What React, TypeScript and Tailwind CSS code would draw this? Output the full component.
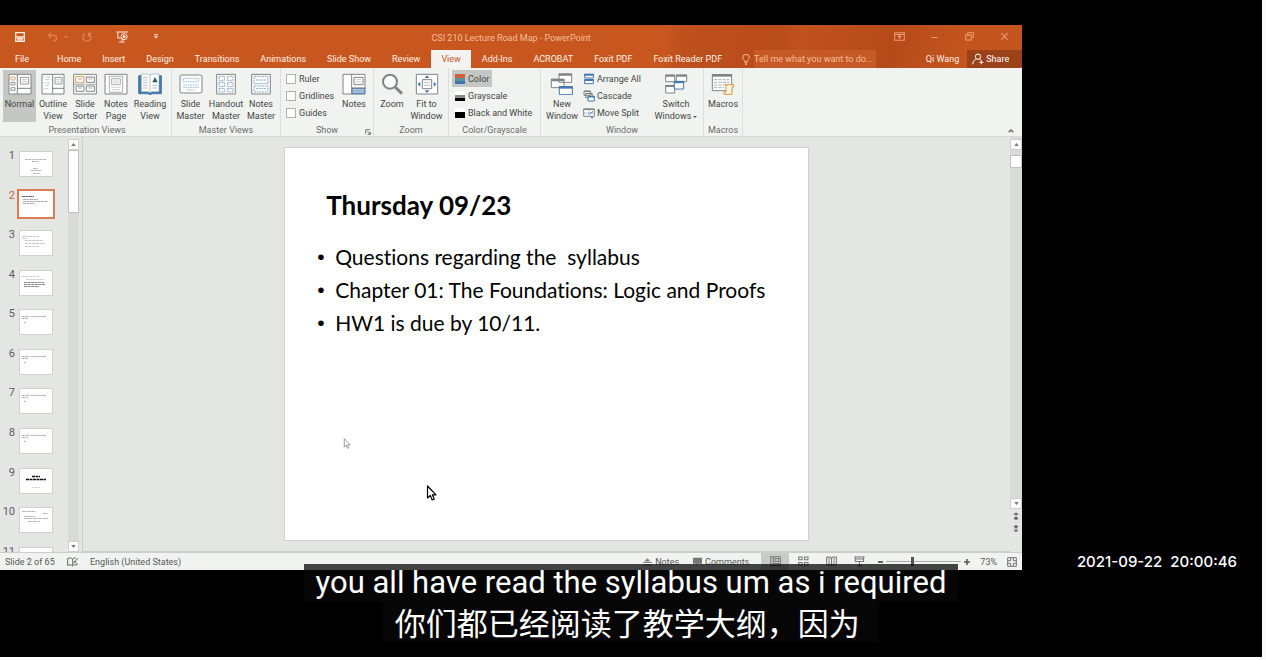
import type { ReactNode } from "react";

const G = "#808484";
const B = "#4678ae";

function Icon({ w = 72, h = 66, className = "w-6 h-[22px]", children }: { w?: number; h?: number; className?: string; children: ReactNode }) {
  return (
    <svg viewBox={`0 0 ${w} ${h}`} className={`shrink-0 ${className}`} fill="none" stroke={G} strokeWidth={3} aria-hidden="true">
      {children}
    </svg>
  );
}

const icons = {
  normal: (
    <Icon>
      <path fill="#fff" d="M3 4h66v59H3zM28 4v59M28 46h41" />
      <path stroke="#dc9a55" strokeWidth={2.5} d="M9 12h12v9H9z" />
      <path strokeWidth={2.5} d="M9 28h12v8H9zM9 44h12v8H9zM37 13h25v20H37z" />
      <path stroke="#aaa" strokeWidth={2} d="M42 20h15M42 26h15" />
    </Icon>
  ),
  outline: (
    <Icon>
      <path fill="#fff" d="M3 4h66v59H3zM35 4v59M35 46h34" />
      <path strokeWidth={2.5} d="M42 13h21v20H42z" />
      <path stroke="#aaa" strokeWidth={2} d="M46 20h13M46 26h13M8 12h4M16 12h12M12 20h14M8 30h4M16 30h10M12 38h12M8 47h4M14 47h8" />
    </Icon>
  ),
  sorter: (
    <Icon>
      <path fill="#fff" d="M2 4h68v59H2z" />
      <path stroke="#dc9a55" d="M8 11h25v18H8z" />
      <path d="M40 12h24v16H40zM9 39h24v16H9zM40 39h24v16H40z" />
      <path strokeWidth={2} d="M15 18h12M46 18h12M15 45h12M46 45h12M2 34h68" />
    </Icon>
  ),
  page: (
    <Icon>
      <path fill="#fff" d="M3 4h66v59H3z" />
      <path strokeWidth={2} d="M16 10h40v48H16zM23 17h26v18H23z" />
      <path strokeWidth={2} stroke="#999" strokeDasharray="4 2" d="M28 24h17M28 29h17M23 43h26M23 50h26" />
    </Icon>
  ),
  reading: (
    <Icon>
      <path fill={B} stroke={B} d="M2 8h68v54H42l-6 3-6-3H2z" />
      <path fill="#fff" stroke="#8aa" strokeWidth={2} d="M10 3h20l6 3 6-3h21v53H42l-6 3-6-3H10zM36 6v52" />
      <path strokeWidth={2} stroke="#999" d="M15 13h14M15 21h14M15 29h14M15 37h14M15 45h14M43 37h14M43 45h14" />
      <path fill="#355" stroke="none" d="M43 28l8-16 8 16z" />
    </Icon>
  ),
  slideMaster: (
    <Icon>
      <path fill="#fff" d="M6 6h60l3 3v48l-3 3H6l-3-3V9z" />
      <path stroke="#7398bd" strokeWidth={2} strokeDasharray="5 2" d="M13 16h46v10H13zM13 36h46M13 43h46M22 51h28" />
    </Icon>
  ),
  handout: (
    <Icon>
      <path fill="#fff" d="M8 4h56v59H8z" />
      <path stroke="#7398bd" strokeWidth={2.5} strokeDasharray="6 2" d="M15 10h16v12H15zM41 10h16v12H41zM15 28h16v12H15zM41 28h16v12H41zM15 46h16v11H15zM41 46h16v11H41z" />
    </Icon>
  ),
  notesMaster: (
    <Icon>
      <path fill="#fff" d="M8 4h56v59H8z" />
      <path stroke="#7398bd" strokeWidth={2.5} strokeDasharray="6 2" d="M15 10h42v22H15zM15 39h42v18H15zM21 47h30M21 21h30" />
    </Icon>
  ),
  notes: (
    <Icon>
      <path fill="#fff" d="M3 4h66v59H3z" />
      <path fill="#a9c6e6" stroke={B} d="M30 46h38v16H30z" />
      <path d="M29 4v59M29 45h40M36 13h27v22H36z" />
      <path stroke="#7398bd" strokeWidth={2} d="M34 54h30" />
      <path stroke="#aaa" strokeWidth={2} d="M41 20h17M41 27h17" />
    </Icon>
  ),
  zoom: (
    <Icon>
      <circle cx="30" cy="26" r="21" strokeWidth={6} fill="#fafcfb" />
      <path strokeWidth={9} d="M45 42l21 20" />
    </Icon>
  ),
  fit: (
    <Icon>
      <path fill="#fff" d="M4 4h64v59H4z" />
      <path d="M22 20h28v27H22z" />
      <path strokeWidth={2} stroke="#999" d="M27 29h18M27 37h18" />
      <path fill={B} stroke="none" d="M29 15l7-8 7 8zM29 52l7 8 7-8zM16 26l-8 8 8 7zM56 26l8 8-8 7z" />
    </Icon>
  ),
  newWindow: (
    <Icon>
      <path fill="#fff" d="M27 3h38v25H27zM4 19h38v25H4z" />
      <path strokeWidth={7} d="M26 5h40M3 21h40" />
      <path fill="#fff" stroke={B} d="M28 41h39v24H28z" />
      <path stroke={B} strokeWidth={8} d="M27 43h41" />
    </Icon>
  ),
  switchWindows: (
    <Icon>
      <path fill="#fff" d="M5 6h27v20H5zM37 6h31v20H37zM5 38h27v22H5z" />
      <path strokeWidth={6} d="M4 8h29M36 8h33M4 39h29" />
      <path fill="#fff" stroke={B} d="M31 26h28v22H31z" />
      <path stroke={B} strokeWidth={7} d="M30 27h30" />
    </Icon>
  ),
  macros: (
    <Icon>
      <path fill="#fff" d="M4 5h58v48H4z" />
      <path strokeWidth={8} d="M3 7h60" />
      <path strokeWidth={2} strokeDasharray="10 3" d="M9 20h46M9 28h46M9 36h36M9 44h30" />
      <path fill="#fff4e5" stroke="#dd9442" d="M45 35h23v7h-5v22H39v-7h6z" />
    </Icon>
  ),
};

function BigButton({ icon, lines, className, active = false, caret = false }: { icon: ReactNode; lines: string[]; className: string; active?: boolean; caret?: boolean }) {
  return (
    <button className={`flex h-[52px] shrink-0 flex-col items-center gap-[3px] pt-[3px] leading-3 ${active ? "bg-[#c5c7c5]" : ""} ${className}`}>
      {icon}
      <span className="block text-center whitespace-nowrap">
        {lines.map((l, i) => (
          <span key={l} className="block">
            {l}
            {caret && i === lines.length - 1 ? <span className="ml-[2px] inline-block border-x-2 border-t-2 border-x-transparent border-t-[#555] align-middle" /> : null}
          </span>
        ))}
      </span>
    </button>
  );
}

function Group({ label, className, children, launcher = false }: { label: string; className: string; children: ReactNode; launcher?: boolean }) {
  return (
    <section aria-label={label} className={`relative flex shrink-0 flex-col border-r border-[#dcdedc] pt-[2px] ${className}`}>
      <div className="flex h-[55px]">{children}</div>
      <div className="text-center leading-3 text-[#6b6d6b]">{label}</div>
      {launcher && (
        <button aria-label="Show settings" className="absolute right-[2px] bottom-px">
          <svg viewBox="0 0 18 18" className="size-[6px]" fill="none" stroke="#777" strokeWidth={3}>
            <path d="M2 14V2h13M7 7l9 9M16 8v8H8" />
          </svg>
        </button>
      )}
    </section>
  );
}

const swatches = [
  { label: "Color", fill: ["#d0603a", "#5b8f9c", "#3f74ad"], active: true },
  { label: "Grayscale", fill: ["#ffffff", "#8b8b8b", "#000000"], active: false },
  { label: "Black and White", fill: ["#ffffff", "#000000", "#000000"], active: false },
];

const windowActions = [
  {
    label: "Arrange All",
    icon: (
      <Icon w={36} h={36} className="size-3">
        <path fill="#fff" stroke={B} d="M5 4h26v11H5zM5 20h26v12H5z" />
        <path stroke={B} strokeWidth={6} d="M4 5h28M4 21h28" />
      </Icon>
    ),
  },
  {
    label: "Cascade",
    icon: (
      <Icon w={36} h={36} className="size-3">
        <path fill="#fff" d="M3 3h19v13H3zM8 10h19v13H8z" />
        <path strokeWidth={4} d="M3 4h20M8 11h20" />
        <path fill="#fff" stroke={B} d="M15 19h19v14H15z" />
        <path stroke={B} strokeWidth={5} d="M14 20h21" />
      </Icon>
    ),
  },
  {
    label: "Move Split",
    icon: (
      <Icon w={36} h={36} className="size-3">
        <path fill="#fff" d="M2 6h32v22H2z" />
        <path strokeWidth={4} d="M2 7h32" />
        <path stroke={B} strokeWidth={2} strokeDasharray="4 2" d="M3 18h30M18 8v20" />
        <path stroke={B} d="M20 22l10-9M24 30l3 4 3-4" />
      </Icon>
    ),
  },
];

const tabs = ["Home", "Insert", "Design", "Transitions", "Animations", "Slide Show", "Review", "View", "Add-Ins", "ACROBAT", "Foxit PDF", "Foxit Reader PDF"];

const outlineLines = <path d="M3 7.500h8M12 7.500h15M3 9.500h6M5 13.500h2" stroke="#888" strokeDasharray="2 .6" />;
const thumbs: ReactNode[] = [
  <path d="M6 8.500h21M13 10.500h7M14 17.500h5M12 19.500h10M14 22.500h7" stroke="#999" strokeDasharray="3 .6" />,
  <g strokeDasharray="3 .5">
    <path d="M3 5.500h12" stroke="#222" />
    <path d="M4 8.500h15M4 10.500h25M4 12.500h12" stroke="#888" />
  </g>,
  <path d="M3 6.500h18M3 8.500h5M6 10.500h18M6 13.500h20M6 16.500h14" stroke="#aaa" strokeDasharray="3 .6" />,
  <g strokeDasharray="3 .6">
    <path d="M3 6.500h18M7 9.500h18" stroke="#bbb" />
    <path d="M5 12.500h20M5 14.500h21M5 16.500h15" stroke="#555" />
  </g>,
  outlineLines,
  outlineLines,
  outlineLines,
  outlineLines,
  <g>
    <path d="M13 8.500h8M7 11.500h20" stroke="#111" strokeWidth={1.6} strokeDasharray="3 .5" />
    <path d="M13 19.500h8" stroke="#ccc" />
  </g>,
  <path d="M3 4.500h14M24 6.500h5M5 9.500h11M5 11.500h24M9 14.500h12" stroke="#999" strokeDasharray="4 .6" />,
  <path d="M5 6.500h16" stroke="#999" />,
];

function Arrow({ up = false, className = "size-[11px]" }: { up?: boolean; className?: string }) {
  return (
    <button aria-label={up ? "Scroll up" : "Scroll down"} className={`flex shrink-0 items-center justify-center border border-[#cfd1cf] bg-white ${className}`}>
      <svg viewBox="0 0 6 4" className="h-[3px] w-[5px]" fill="#777">
        <path d={up ? "M0 4l3-4 3 4z" : "M0 0l3 4 3-4z"} />
      </svg>
    </button>
  );
}

function Pointer({ className }: { className: string }) {
  return (
    <svg viewBox="0 0 10 16" className={`absolute ${className}`} fill="#fff" strokeWidth={1.2} strokeLinejoin="round" aria-hidden="true">
      <path d="M1 1v12l2.800-2.600L5.700 15l2-.9-1.800-4.300H9.500z" />
    </svg>
  );
}

function DoubleArrow({ up = false }: { up?: boolean }) {
  return (
    <button aria-label={up ? "Previous slide" : "Next slide"} className="flex h-[13px] w-full items-center justify-center">
      <svg viewBox="0 0 18 24" className="h-2 w-[6px]" fill="#666">
        <path d={up ? "M1 9l8-8 8 8zM1 20l8-8 8 8zM5 20h8v3H5z" : "M1 14l8 8 8-8zM1 4l8 8 8-8zM5 1h8v3H5z"} />
      </svg>
    </button>
  );
}

function TitleBar() {
  return (
    <div className="grid h-[25px] grid-cols-[1fr_auto_1fr] items-center text-[#f6bd98]">
      <div className="flex items-center pl-[15px] pb-[2px]">
        <button aria-label="Save" className="mr-[22px] text-[#ffeade]">
          <svg viewBox="0 0 30 30" className="size-[10px]" fill="none" stroke="currentColor" strokeWidth={4}>
            <path d="M2 2h26v26H2zM4 15h22M9 27v-7h12v7M14 22v5" />
          </svg>
        </button>
        <button aria-label="Undo" className="mr-[6px] text-[#dd8250]">
          <svg viewBox="0 0 33 30" className="h-[10px] w-[11px]" fill="none" stroke="currentColor" strokeWidth={4}>
            <path d="M12 2L4 10l8 8M4 10h15c13 0 13 16 0 17" />
          </svg>
        </button>
        <button aria-label="Undo list" className="mr-[14px] border-x-2 border-t-2 border-x-transparent border-t-[#dd8250]" />
        <button aria-label="Repeat" className="mr-6 text-[#dd8250]">
          <svg viewBox="0 0 30 30" className="size-[10px]" fill="none" stroke="currentColor" strokeWidth={4}>
            <path d="M9 5a12 12 0 1 0 13 1M20 15V4h9" />
          </svg>
        </button>
        <button aria-label="Start from beginning" className="mr-[25px] text-[#ffeade]">
          <svg viewBox="0 0 38 36" className="h-3 w-[13px]" fill="none" stroke="currentColor" strokeWidth={3}>
            <path d="M1 3h35M5 3v18h9M18 21v9M9 33h17" />
            <circle cx="24" cy="17" r="9" />
            <path fill="currentColor" d="M22 13l6 4-6 4z" />
          </svg>
        </button>
        <button aria-label="Customize toolbar" className="text-[#ffeade]">
          <svg viewBox="0 0 12 14" className="h-[5px] w-1" fill="currentColor">
            <path d="M0 0h12v3H0zM0 6h12l-6 7z" />
          </svg>
        </button>
      </div>
      <h1 className="whitespace-nowrap">CSI 210 Lecture Road Map - PowerPoint</h1>
      <div className="flex justify-end pb-[2px]">
        {[
          ["Ribbon display options", "M2 5h28v22H2zM2 10h28M16 23v-9M11 18l5-5 5 5"],
          ["Minimize", "M7 19h18"],
          ["Restore", "M5 12h16v14H5zM11 12V5h16v14h-6"],
          ["Close", "M7 6l18 19M25 6L7 25"],
        ].map(([label, d]) => (
          <button key={label} aria-label={label} className="flex w-[35px] justify-center text-[#eb9d70]">
            <svg viewBox="0 0 32 32" className="size-[11px]" fill="none" stroke="currentColor" strokeWidth={3}>
              <path d={d} />
            </svg>
          </button>
        ))}
      </div>
    </div>
  );
}

function TabRow() {
  return (
    <div className="flex h-[18px] items-stretch text-[#fff0e6]">
      <button className="w-[44px] shrink-0">File</button>
      <nav className="flex shrink-0 gap-px pl-[3px]">
        {tabs.map((t) => (
          <button key={t} className={t === "View" ? "bg-[#f3f4f2] px-[10px] text-[#c8571f]" : "px-[10px]"}>
            {t}
          </button>
        ))}
      </nav>
      <label className="ml-[10px] flex w-[134px] items-center gap-1 text-[#f6bd98]">
        <svg viewBox="0 0 24 33" className="h-[11px] w-2 shrink-0" fill="none" stroke="currentColor" strokeWidth={3}>
          <path d="M8 23c0-5-6-7-6-13a10 9 0 0 1 20 0c0 6-6 8-6 13zM8 27h8M9 31h6" />
        </svg>
        <input aria-label="Tell me" placeholder="Tell me what you want to do..." className="h-full w-full min-w-0 bg-[#c65a26] outline-none placeholder:text-[#f6bd98]" />
      </label>
      <span className="ml-auto flex items-center whitespace-nowrap">Qi Wang</span>
      <button className="ml-2 flex w-[55px] items-center gap-[2px] bg-[#9c4219] pl-[5px] text-white">
        <svg viewBox="0 0 36 36" className="size-3" fill="none" stroke="currentColor" strokeWidth={3}>
          <circle cx="18" cy="11" r="8" />
          <path d="M2 34c1-8 5-14 11-16M22 18l4 3M22 28h12M28 22v12" />
        </svg>
        Share
      </button>
    </div>
  );
}

function Ribbon() {
  return (
    <div className="relative flex h-[69px] border-b border-[#d9dbd9] bg-[#f1f3f1] text-[#444644]">
      <Group label="Presentation Views" className="w-[172px] pl-[3px]">
        <BigButton icon={icons.normal} lines={["Normal"]} className="w-[33px]" active />
        <BigButton icon={icons.outline} lines={["Outline", "View"]} className="w-[34px]" />
        <BigButton icon={icons.sorter} lines={["Slide", "Sorter"]} className="w-[30px]" />
        <BigButton icon={icons.page} lines={["Notes", "Page"]} className="w-8" />
        <BigButton icon={icons.reading} lines={["Reading", "View"]} className="w-9" />
      </Group>
      <Group label="Master Views" className="w-[109px]">
        <BigButton icon={icons.slideMaster} lines={["Slide", "Master"]} className="w-[37px]" />
        <BigButton icon={icons.handout} lines={["Handout", "Master"]} className="w-[34px]" />
        <BigButton icon={icons.notesMaster} lines={["Notes", "Master"]} className="w-9" />
      </Group>
      <Group label="Show" className="w-[93px]" launcher>
        <div className="flex w-[56px] shrink-0 flex-col pl-[5px]">
          {["Ruler", "Gridlines", "Guides"].map((c) => (
            <label key={c} className="flex h-[17px] items-center gap-[3px] whitespace-nowrap">
              <input type="checkbox" className="size-[10px] shrink-0 appearance-none border border-[#b0b2b0] bg-white" />
              {c}
            </label>
          ))}
        </div>
        <BigButton icon={icons.notes} lines={["Notes"]} className="w-[34px]" />
      </Group>
      <Group label="Zoom" className="w-[75px]">
        <BigButton icon={icons.zoom} lines={["Zoom"]} className="w-[36px]" />
        <BigButton icon={icons.fit} lines={["Fit to", "Window"]} className="w-[33px]" />
      </Group>
      <Group label="Color/Grayscale" className="w-[92px]">
        <div className="flex flex-col items-start pl-[3px]">
          {swatches.map((s) => (
            <button key={s.label} className={`flex h-[17px] items-center gap-[3px] px-[3px] whitespace-nowrap ${s.active ? "bg-[#c5c7c5]" : ""}`}>
              <svg viewBox="0 0 10 10" className="size-[10px] shrink-0">
                <path fill={s.fill[0]} d="M0 0h10v4H0z" />
                <path fill={s.fill[1]} d="M0 4h10v3H0z" />
                <path fill={s.fill[2]} d="M0 7h10v3H0z" />
              </svg>
              {s.label}
            </button>
          ))}
        </div>
      </Group>
      <Group label="Window" className="w-[163px]">
        <BigButton icon={icons.newWindow} lines={["New", "Window"]} className="w-[42px]" />
        <div className="flex w-[68px] shrink-0 flex-col">
          {windowActions.map((a) => (
            <button key={a.label} className="flex h-[17px] items-center gap-[2px] whitespace-nowrap">
              {a.icon}
              {a.label}
            </button>
          ))}
        </div>
        <BigButton icon={icons.switchWindows} lines={["Switch", "Windows"]} className="w-[50px]" caret />
      </Group>
      <Group label="Macros" className="w-[39px]">
        <BigButton icon={icons.macros} lines={["Macros"]} className="w-[38px]" />
      </Group>
      <button aria-label="Collapse the ribbon" className="mt-auto mr-2 mb-[3px] ml-auto">
        <svg viewBox="0 0 18 12" className="h-1 w-[6px]" fill="none" stroke="#666" strokeWidth={4}>
          <path d="M2 10l7-7 7 7" />
        </svg>
      </button>
    </div>
  );
}

function Workspace() {
  return (
    <div className="flex min-h-0 flex-1 bg-[#e4e6e4]">
      <aside className="h-full w-[68px] shrink-0 overflow-hidden pt-[12px]">
        <ol className="flex h-[108%] flex-col">
          {thumbs.map((t, i) => (
            <li key={i} className="flex min-h-0 flex-1 items-start">
              <span className={`mt-px w-[15px] shrink-0 text-right text-[11px] leading-3 ${i === 1 ? "text-[#c8663c]" : "text-[#5c5e5c]"}`}>{i + 1}</span>
              <svg viewBox="0 0 34 26" className={`mt-[2px] ml-1 h-[26px] w-[34px] shrink-0 bg-white outline ${i === 1 ? "outline-2 outline-[#da7c50]" : "outline-1 -outline-offset-1 outline-[#cfd1cf]"}`} fill="none" strokeWidth={0.7}>
                {t}
              </svg>
            </li>
          ))}
        </ol>
      </aside>
      <div className="flex w-[15px] shrink-0 flex-col border-r border-[#cccecc] pt-[2px] pr-[3px]">
        <Arrow up />
        <div className="flex-1 bg-[#d9dbd9]">
          <div className="h-[16%] border border-[#bfc1bf] bg-white" />
        </div>
        <Arrow />
      </div>
      <main className="flex min-w-0 flex-1 items-start justify-center border-b border-[#cccecc] pt-[10px]">
        <article className="relative aspect-[4/3] w-[56.6%] border border-[#cfd1cf] bg-white font-[Lato,sans-serif] text-black [font-variant-ligatures:none]">
          <h2 className="pt-[39px] pl-[41px] text-[26px] leading-9 font-bold">Thursday 09/23</h2>
          <ul className="pt-[17px] pl-8 text-[21px] leading-[33px]">
            {["Questions regarding the  syllabus", "Chapter 01: The Foundations: Logic and Proofs", "HW1 is due by 10/11."].map((b) => (
              <li key={b} className="flex whitespace-pre">
                <span className="w-[18px] shrink-0 font-['Liberation_Sans',sans-serif]">•</span>
                {b}
              </li>
            ))}
          </ul>
          <Pointer className="top-[74%] left-[11%] h-[11px] w-2 stroke-[#888]" />
          <Pointer className="top-[86%] left-[27%] h-4 w-[11px] stroke-black" />
        </article>
      </main>
      <div className="flex w-3 shrink-0 flex-col bg-[#d9dbd9] pt-[2px]">
        <Arrow up className="h-[11px] w-3" />
        <div className="flex-1 pt-[5px]">
          <div className="h-[13px] border border-[#bfc1bf] bg-white" />
        </div>
        <Arrow className="h-[11px] w-3" />
        <div className="h-[43px] bg-[#e4e6e4]">
          <DoubleArrow up />
          <DoubleArrow />
        </div>
      </div>
    </div>
  );
}

function StatusBar() {
  const views: [string, ReactNode][] = [
    ["Normal view", <path d="M2 2h28v26H2zM9 2v26M9 22h21M14 7h11v9H14z" />],
    ["Slide sorter", <path d="M2 3h10v8H2zM19 3h10v8H19zM2 19h10v8H2zM19 19h10v8H19z" />],
    ["Reading view", <path d="M2 3h10l4 3 4-3h10v23H20l-4 3-4-3H2zM16 6v22M6 9h6M6 15h6M6 21h6M20 9h6M20 15h6M20 21h6" />],
    ["Slide show", <path d="M1 3h30M4 4v12h24V4M16 16v12M9 28h14M4 9h24" />],
  ];
  return (
    <footer className="flex h-[18px] shrink-0 items-center border-t border-[#cccecc] bg-[#f1f3f1] pr-[5px] pl-[5px] whitespace-nowrap text-[#555755]">
      <span className="w-[62px]">Slide 2 of 65</span>
      <button aria-label="Spelling" className="w-[23px]">
        <svg viewBox="0 0 36 30" className="h-[10px] w-3" fill="none" stroke="#666" strokeWidth={3}>
          <path d="M17 6C13 2 7 3 2 4v21c5-2 11-2 15 2 3-4 8-4 13-3v-6M17 6v20M17 6c3-3 7-3 10-3M20 19L32 4M22 12l4 6" />
        </svg>
      </button>
      <span>English (United States)</span>
      <button className="ml-auto flex items-center gap-[3px]">
        <svg viewBox="0 0 27 24" className="h-2 w-[9px]" fill="none" stroke="#666" strokeWidth={3}>
          <path d="M1 13h25M1 21h25M8 8l5-6 5 6z" />
        </svg>
        Notes
      </button>
      <button className="ml-[14px] flex items-center gap-[3px]">
        <svg viewBox="0 0 27 27" className="size-[9px]" fill="#777">
          <path d="M0 2h27v18H16l-5 6v-6H0z" />
        </svg>
        Comments
      </button>
      <div className="ml-3 flex h-full">
        {views.map(([label, d], i) => (
          <button key={label} aria-label={label} className={`flex w-7 items-center justify-center ${i === 0 ? "bg-[#c9cbc9]" : ""}`}>
            <svg viewBox="0 0 32 32" className="size-[11px]" fill="none" stroke="#777" strokeWidth={3}>
              {d}
            </svg>
          </button>
        ))}
      </div>
      <button aria-label="Zoom out" className="ml-[5px] h-[2px] w-[5px] bg-[#666]" />
      <input
        type="range"
        aria-label="Zoom level"
        min={0}
        max={100}
        defaultValue={35}
        className="mx-[3px] h-[9px] w-[75px] appearance-none bg-[linear-gradient(#aaa,#aaa)] bg-[length:100%_1px] bg-center bg-no-repeat [&::-webkit-slider-thumb]:h-[9px] [&::-webkit-slider-thumb]:w-[3px] [&::-webkit-slider-thumb]:appearance-none [&::-webkit-slider-thumb]:bg-[#555]"
      />
      <button aria-label="Zoom in" className="flex">
        <svg viewBox="0 0 6 6" className="size-[6px]" stroke="#555" strokeWidth={1.5}>
          <path d="M3 0v6M0 3h6" />
        </svg>
      </button>
      <span className="w-[37px] text-center">73%</span>
      <button aria-label="Fit slide to window" className="flex">
        <svg viewBox="0 0 30 30" className="size-[10px]" fill="none" stroke="#777" strokeWidth={3}>
          <path d="M2 2h26v26H2zM11 2v9H2M19 2v9h9M2 19h9v9M28 19h-9v9" />
        </svg>
      </button>
    </footer>
  );
}

export default function App() {
  return (
    <div className="h-screen overflow-hidden bg-[#fafafa] pr-1 pb-[3px]">
      <div className="relative flex h-full bg-black pt-[25px] pb-[87px]">
        <div className="flex min-h-0 w-[81%] flex-col overflow-hidden bg-[#e4e6e4] font-[Roboto,'Noto_Sans',sans-serif] text-[9px] leading-3">
          <header className="shrink-0 bg-[linear-gradient(100deg,#c8571f_64%,#bd501d_66%,#b84c1a_75%,#c0521e_77%,#b54a19_86%,#c4551f_93%)]">
            <TitleBar />
            <TabRow />
            <Ribbon />
          </header>
          <Workspace />
          <StatusBar />
        </div>
        <div className="flex flex-1 items-end justify-end pr-[25px]">
          <time dateTime="2021-09-22T20:00:46" className="font-[Inter,sans-serif] text-[15px] leading-4 font-medium whitespace-pre text-white">
            2021-09-22  20:00:46
          </time>
        </div>
        <div className="absolute inset-x-0 bottom-[15px] flex flex-col items-center whitespace-pre text-white">
          <p className="bg-[#080808]/75 px-3 font-[Roboto,sans-serif] text-[31px] leading-[38px]">you all have read the syllabus um as i required</p>
          <p lang="zh-CN" className="bg-[#080808]/75 px-3 pt-[6px] font-[Roboto,'Noto_Sans_CJK_SC',sans-serif] text-[31px] leading-[34px]">
            {"你们都已经阅读了教学大纲，因为 "}
          </p>
        </div>
      </div>
    </div>
  );
}
